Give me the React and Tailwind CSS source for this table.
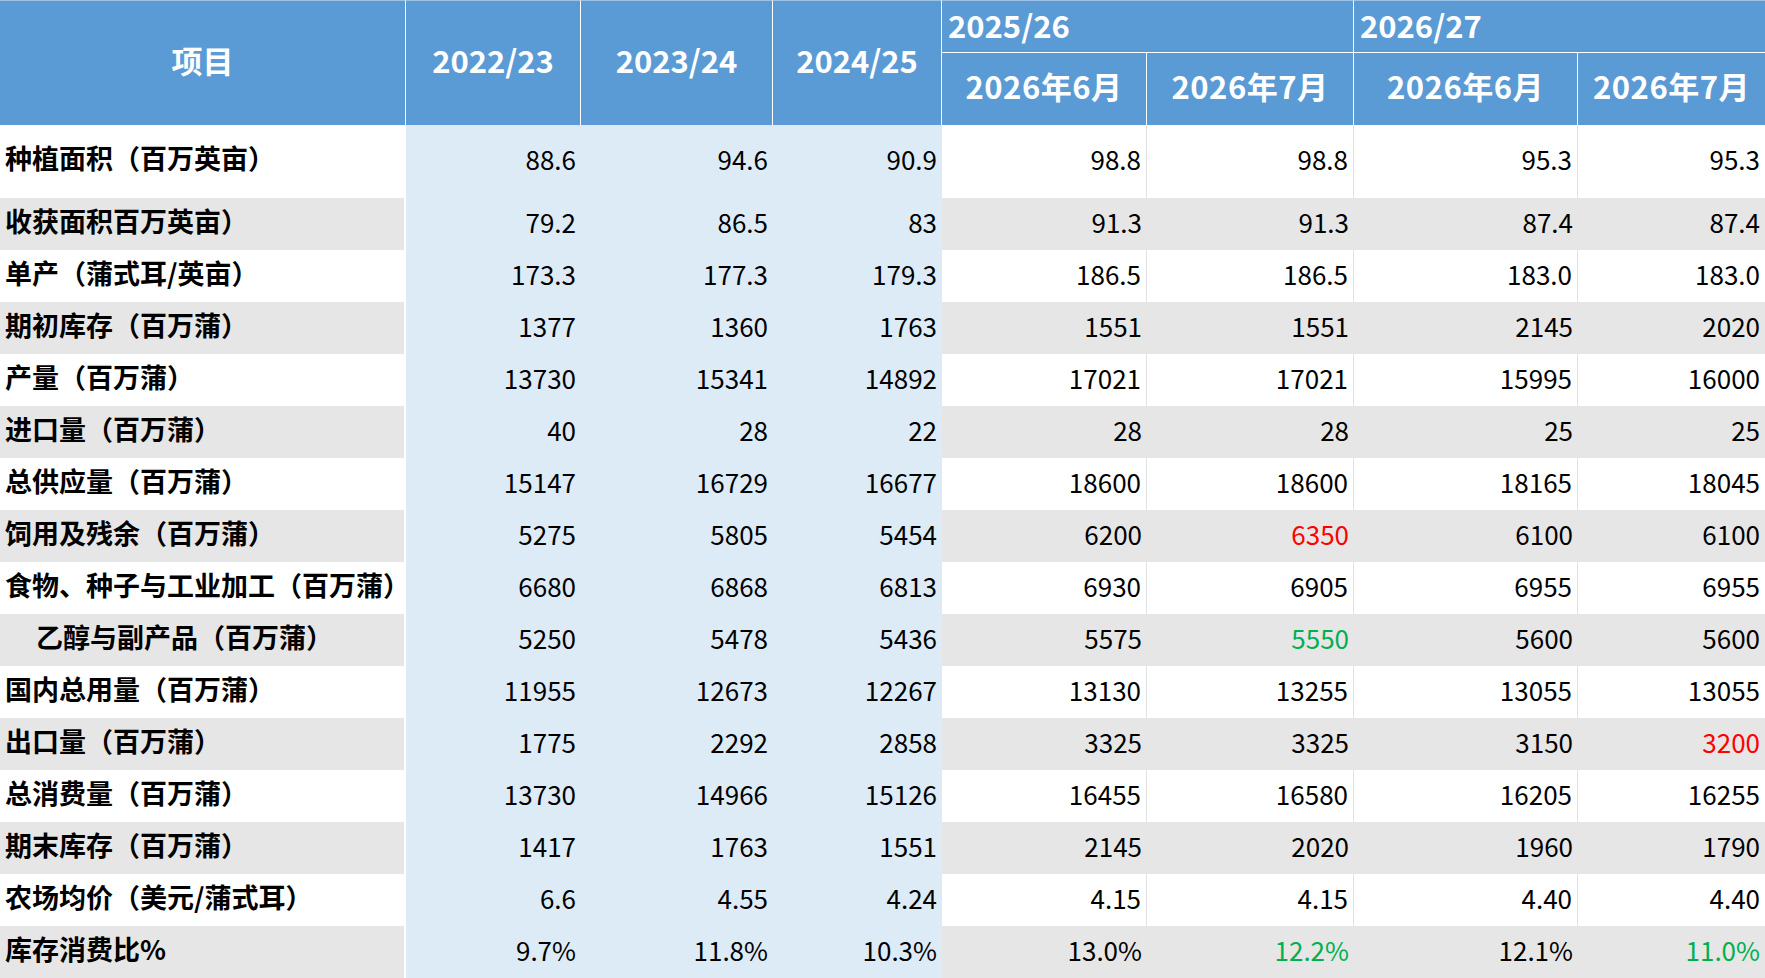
import React from "react";

const rows = [
  { label: "种植面积（百万英亩）", v: ["88.6", "94.6", "90.9", "98.8", "98.8", "95.3", "95.3"] },
  { label: "收获面积百万英亩）", v: ["79.2", "86.5", "83", "91.3", "91.3", "87.4", "87.4"] },
  { label: "单产（蒲式耳/英亩）", v: ["173.3", "177.3", "179.3", "186.5", "186.5", "183.0", "183.0"] },
  { label: "期初库存（百万蒲）", v: ["1377", "1360", "1763", "1551", "1551", "2145", "2020"] },
  { label: "产量（百万蒲）", v: ["13730", "15341", "14892", "17021", "17021", "15995", "16000"] },
  { label: "进口量（百万蒲）", v: ["40", "28", "22", "28", "28", "25", "25"] },
  { label: "总供应量（百万蒲）", v: ["15147", "16729", "16677", "18600", "18600", "18165", "18045"] },
  { label: "饲用及残余（百万蒲）", v: ["5275", "5805", "5454", "6200", "6350", "6100", "6100"], c: { 4: "r" } },
  { label: "食物、种子与工业加工（百万蒲）", v: ["6680", "6868", "6813", "6930", "6905", "6955", "6955"] },
  { label: "乙醇与副产品（百万蒲）", v: ["5250", "5478", "5436", "5575", "5550", "5600", "5600"], c: { 4: "g" }, indent: true },
  { label: "国内总用量（百万蒲）", v: ["11955", "12673", "12267", "13130", "13255", "13055", "13055"] },
  { label: "出口量（百万蒲）", v: ["1775", "2292", "2858", "3325", "3325", "3150", "3200"], c: { 6: "r" } },
  { label: "总消费量（百万蒲）", v: ["13730", "14966", "15126", "16455", "16580", "16205", "16255"] },
  { label: "期末库存（百万蒲）", v: ["1417", "1763", "1551", "2145", "2020", "1960", "1790"] },
  { label: "农场均价（美元/蒲式耳）", v: ["6.6", "4.55", "4.24", "4.15", "4.15", "4.40", "4.40"] },
  { label: "库存消费比%", v: ["9.7%", "11.8%", "10.3%", "13.0%", "12.2%", "12.1%", "11.0%"], c: { 4: "g", 6: "g" } },
];

const hd = "bg-[#5b9bd5] flex items-center text-white font-bold text-[31px]";

export default function App() {
  return (
    <div className="w-[1765px] h-[978px] bg-white overflow-hidden font-['Noto_Sans_CJK_SC','Noto_Sans',sans-serif]">
      <div className="grid grid-cols-[406px_175px_192px_169px_205px_207px_224px_187px] grid-rows-[53px_72px_73px_repeat(15,52px)]">
        {/* header */}
        <div className={"row-span-2 border-r border-white border-t border-t-[#9cc3e6] justify-center pb-[6px] " + hd}>项目</div>
        <div className={"row-span-2 border-r border-white border-t border-t-[#9cc3e6] justify-center pb-[6px] " + hd}>2022/23</div>
        <div className={"row-span-2 border-r border-white border-t border-t-[#9cc3e6] justify-center pb-[6px] " + hd}>2023/24</div>
        <div className={"row-span-2 border-r border-white border-t border-t-[#9cc3e6] justify-center pb-[6px] " + hd}>2024/25</div>
        <div className={"col-span-2 border-r border-b border-white border-t border-t-[#9cc3e6] pl-[6px] pb-[2px] " + hd}>2025/26</div>
        <div className={"col-span-2 border-b border-white border-t border-t-[#9cc3e6] pl-[6px] pb-[2px] " + hd}>2026/27</div>
        <div className={"border-r border-white justify-center tracking-[0.5px] pb-[6px] " + hd}>2026年6月</div>
        <div className={"border-r border-white justify-center tracking-[0.5px] pb-[6px] " + hd}>2026年7月</div>
        <div className={"border-r border-white justify-center tracking-[0.5px] pb-[6px] " + hd}>2026年6月</div>
        <div className={"justify-center tracking-[0.5px] pb-[6px] " + hd}>2026年7月</div>

        {rows.map((r, i) => {
          const gray = i % 2 === 1;
          return (
            <React.Fragment key={i}>
              <div
                className={
                  (gray ? "bg-[#e7e6e6] " : "bg-white ") +
                  (r.indent ? "pl-[36px] " : "pl-[5px] ") +
                  "border-r-2 border-white flex items-center pb-[6px] font-bold text-[27px] text-black whitespace-nowrap"
                }
              >
                {r.label}
              </div>
              {r.v.map((val, j) => {
                const blue = j < 3;
                const col = r.c && r.c[j];
                const color = col === "r" ? "text-[#ff0000]" : col === "g" ? "text-[#00b050]" : "text-black";
                const bg = blue ? "bg-[#ddebf7]" : gray ? "bg-[#e7e6e6]" : "bg-white";
                const sep = !blue && !gray && j < 6 ? " border-r border-[#e2e2e2]" : "";
                return (
                  <div key={j} className={bg + " " + color + sep + " flex items-center justify-end pr-[5px] pb-[6px] text-[26px]"}>
                    {val}
                  </div>
                );
              })}
            </React.Fragment>
          );
        })}
      </div>
    </div>
  );
}
